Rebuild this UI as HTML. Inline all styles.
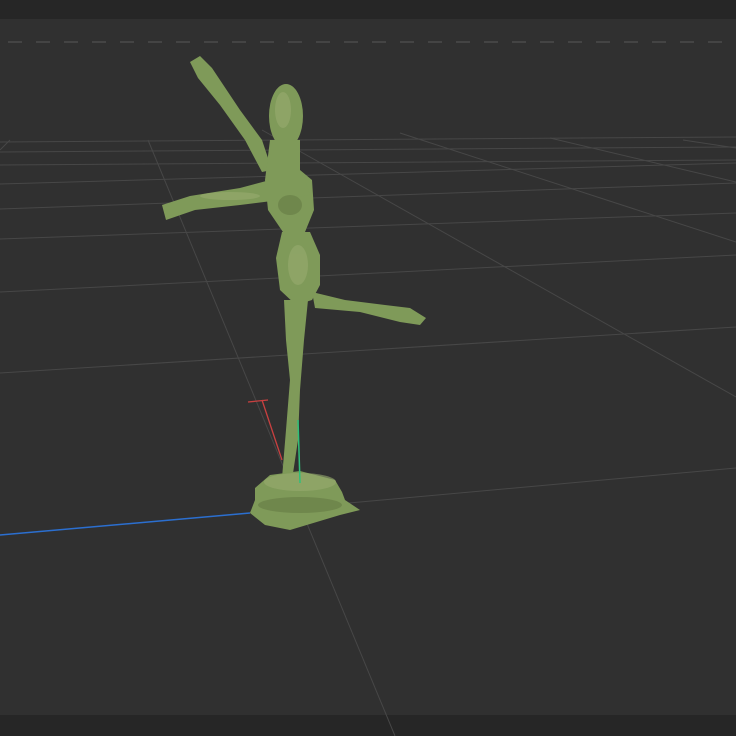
<!DOCTYPE html>
<html><head><style>
html,body{margin:0;padding:0;background:#303030;}
svg{display:block}
</style></head><body>
<svg width="736" height="736" viewBox="0 0 736 736" xmlns="http://www.w3.org/2000/svg">
<rect x="0" y="0" width="736" height="736" fill="#303030"/>
<rect x="0" y="0" width="736" height="19" fill="#262626"/>
<rect x="0" y="715" width="736" height="21" fill="#262626"/>
<line x1="8" y1="42" x2="736" y2="42" stroke="#4a4a4a" stroke-width="1.5" stroke-dasharray="14,14"/>
<g stroke="#474747" stroke-width="1" fill="none">
<line x1="0" y1="142" x2="736" y2="137"/>
<line x1="0" y1="152" x2="736" y2="147"/>
<line x1="0" y1="165" x2="736" y2="160"/>
<line x1="0" y1="184" x2="736" y2="163"/>
<line x1="0" y1="209" x2="736" y2="183"/>
<line x1="0" y1="239" x2="736" y2="213"/>
<line x1="0" y1="292" x2="736" y2="255"/>
<line x1="0" y1="373" x2="736" y2="327"/>
<line x1="250" y1="512" x2="736" y2="468"/>
<line x1="148" y1="140" x2="395" y2="736"/>
<line x1="10" y1="140" x2="0" y2="150"/>
<line x1="262" y1="130" x2="736" y2="397"/>
<line x1="400" y1="133" x2="736" y2="242"/>
<line x1="550" y1="138" x2="736" y2="182"/>
<line x1="683" y1="140" x2="736" y2="148"/>
</g>
<line x1="0" y1="535" x2="250" y2="513" stroke="#2b6fd0" stroke-width="1.5"/>
<line x1="262" y1="400" x2="282" y2="460" stroke="#c94040" stroke-width="1.3"/>
<line x1="248" y1="402" x2="268" y2="400" stroke="#c94040" stroke-width="1.3"/>
<g fill="#7f9a59">
<path d="M190 62 L200 56 L212 68 L240 110 L262 140 L272 170 L262 172 L245 140 L220 105 L198 78 Z"/>
<ellipse cx="286" cy="116" rx="17" ry="32"/>
<path d="M270 140 L300 140 L300 170 L312 180 L314 210 L305 232 L285 235 L268 210 L265 180 Z"/>
<path d="M162 205 L190 196 L240 188 L270 180 L305 180 L310 195 L280 200 L240 205 L195 210 L166 220 Z"/>
<path d="M282 232 L310 232 L320 255 L320 285 L312 300 L296 305 L280 290 L276 258 Z"/>
<path d="M312 292 L345 300 L385 305 L410 308 L426 318 L420 325 L400 322 L360 312 L315 308 Z"/>
<path d="M284 300 L308 300 L304 340 L300 390 L298 440 L292 480 L282 478 L286 430 L290 380 L286 340 Z"/>
<path d="M255 488 L270 475 L300 471 L335 480 L342 492 L345 500 L360 510 L340 515 L310 524 L290 530 L265 525 L250 513 L255 500 Z"/>
</g>
<g fill="#97ab70" opacity="0.6">
<ellipse cx="300" cy="482" rx="36" ry="9"/>
<ellipse cx="298" cy="265" rx="10" ry="20"/>
<ellipse cx="283" cy="110" rx="8" ry="18"/>
<ellipse cx="230" cy="196" rx="30" ry="4"/>
</g>
<g fill="#5f7440" opacity="0.5">
<ellipse cx="300" cy="505" rx="42" ry="8"/>
<ellipse cx="290" cy="205" rx="12" ry="10"/>
</g>
<line x1="298" y1="420" x2="300" y2="483" stroke="#2fbf7a" stroke-width="1.5"/>
</svg>
</body></html>
